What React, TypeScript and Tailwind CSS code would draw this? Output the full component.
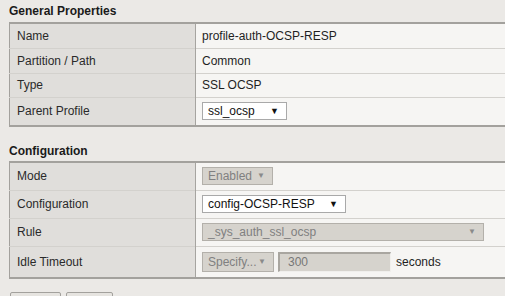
const Sel = ({ label, width, disabled = false, arrowSmall = false }: { label: string; width: string; disabled?: boolean; arrowSmall?: boolean }) => (
  <div
    className={`${width} h-[18px] flex items-center justify-between pl-[5px] pr-[7px] border ${
      disabled ? "bg-[#d6d3cd] border-[#b3b0aa] text-[#808080]" : "bg-white border-[#a9a9a9] text-[#111]"
    }`}
  >
    <span className="leading-none">{label}</span>
    <span className={`${arrowSmall ? "text-[8px]" : "text-[9px]"} leading-none ${disabled ? "text-[#8a8a8a]" : "text-[#111]"}`}>▼</span>
  </div>
);

const cell = "[font-family:'Liberation_Sans',Arial,sans-serif] text-[12px] align-middle";

const Row = ({ label, h, children, last = false }: { label: string; h: string; children: React.ReactNode; last?: boolean }) => (
  <tr className={`${h} ${last ? "" : "border-b border-[#d3d1cd]"}`}>
    <td className={`${cell} w-[186px] bg-[#e0dedb] pl-[7px] text-[#2a2a2a] border-r border-[#a6a4a0]`}>{label}</td>
    <td className={`${cell} bg-[#f6f5f3] pl-[6px] text-[#1f1f1f]`}>{children}</td>
  </tr>
);

export default function App() {
  return (
    <div className="w-[505px] h-[296px] overflow-hidden bg-[#ebe9e6] [font-family:'Liberation_Sans',Arial,sans-serif] text-[12px]">
      <div className="pl-[9px]">
        <h2 className="h-[22px] pt-[4px] font-bold text-[12px] text-[#1a1a1a] leading-[14px]">General Properties</h2>
        <table className="w-[510px] table-fixed border-collapse border-t-2 border-l border-b-2 border-[#a3a19d]">
          <tbody>
            <Row label="Name" h="h-[25px]">profile-auth-OCSP-RESP</Row>
            <Row label="Partition / Path" h="h-[25px]">Common</Row>
            <Row label="Type" h="h-[24px]">SSL OCSP</Row>
            <Row label="Parent Profile" h="h-[29px]" last>
              <Sel label="ssl_ocsp" width="w-[85px]" />
            </Row>
          </tbody>
        </table>

        <h2 className="h-[34px] pt-[17px] font-bold text-[12px] text-[#1a1a1a] leading-[14px]">Configuration</h2>
        <table className="w-[510px] table-fixed border-collapse border-t-2 border-l border-b-2 border-[#a3a19d]">
          <tbody>
            <Row label="Mode" h="h-[28px]">
              <Sel label="Enabled" width="w-[71px]" disabled arrowSmall />
            </Row>
            <Row label="Configuration" h="h-[28px]">
              <Sel label="config-OCSP-RESP" width="w-[144px]" />
            </Row>
            <Row label="Rule" h="h-[28px]">
              <Sel label="_sys_auth_ssl_ocsp" width="w-[282px]" disabled arrowSmall />
            </Row>
            <Row label="Idle Timeout" h="h-[32px]" last>
              <div className="flex items-center">
                <div className="h-[20px] flex">
                  <Sel label="Specify..." width="w-[72px] !h-[20px]" disabled arrowSmall />
                </div>
                <div className="ml-[4px] w-[113px] h-[20px] flex items-center pl-[8px] bg-[#d6d3cd] border-t-2 border-l-2 border-[#a9a6a0] border-r border-b border-r-[#f0efec] border-b-[#f0efec] text-[#777]">
                  300
                </div>
                <span className="ml-[5px] text-[#1f1f1f]">seconds</span>
              </div>
            </Row>
          </tbody>
        </table>

        <div className="flex gap-[5px] mt-[13px] ml-[1px]">
          <div className="w-[51px] h-[20px] bg-[#e6e4e0] border border-[#a3a19d] rounded-[2px]" />
          <div className="w-[47px] h-[20px] bg-[#e6e4e0] border border-[#a3a19d] rounded-[2px]" />
        </div>
      </div>
    </div>
  );
}
